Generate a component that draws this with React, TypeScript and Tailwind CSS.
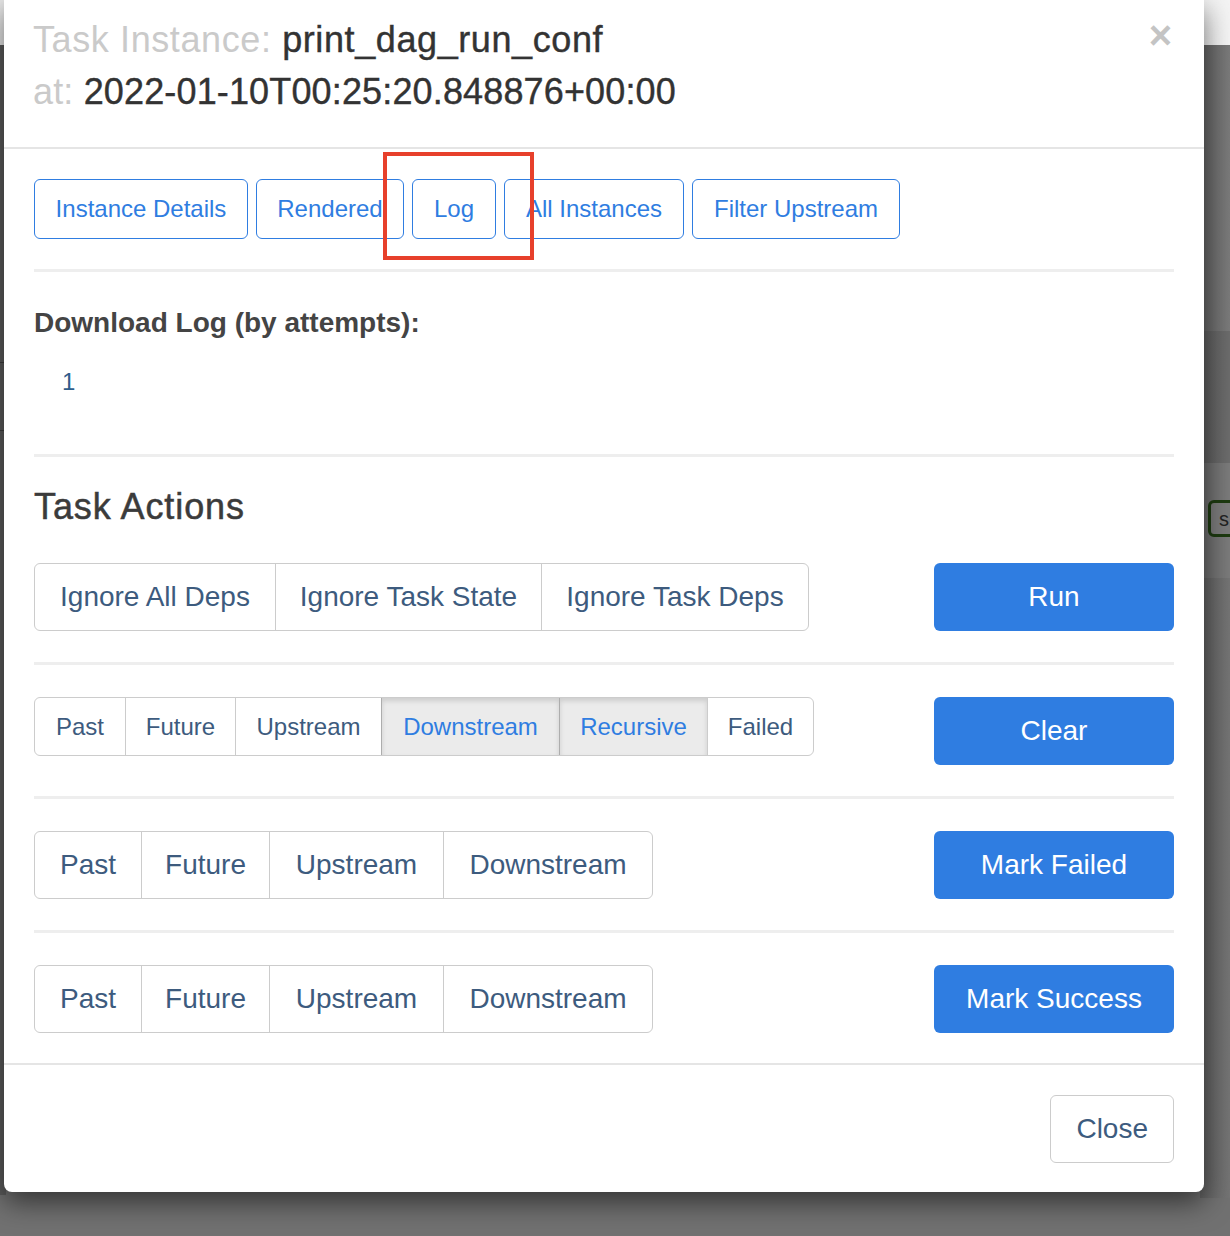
import React from "react";

const font = { fontFamily: '"Liberation Sans", Arial, Helvetica, sans-serif' };

function Seg({
  items,
  widths,
  size,
  active = [],
}: {
  items: string[];
  widths: string[];
  size: "lg" | "md";
  active?: string[];
}) {
  return (
    <div
      className={
        "flex rounded-[6px] border border-[#cccccc] overflow-hidden bg-white " +
        (size === "lg" ? "h-[68px]" : "h-[59px]")
      }
    >
      {items.map((t, i) => {
        const isActive = active.includes(t);
        return (
          <div
            key={t + i}
            className={
              "flex items-center justify-center whitespace-nowrap " +
              widths[i] +
              " " +
              (i > 0 ? "border-l " : "") +
              (isActive
                ? "border-[#adadad] bg-[#ebebeb] text-[#2f7de1] shadow-[inset_0_3px_5px_rgba(0,0,0,0.13)] "
                : "border-[#cccccc] text-[#3d5b7e] ") +
              (size === "lg" ? "text-[28px]" : "text-[24px]")
            }
          >
            {t}
          </div>
        );
      })}
    </div>
  );
}

function Primary({ label }: { label: string }) {
  return (
    <div className="w-[240px] h-[68px] rounded-[6px] bg-[#2f7de1] text-white text-[28px] flex items-center justify-center">
      {label}
    </div>
  );
}

function Hr({ mt }: { mt: string }) {
  return <div className={"h-[3px] bg-[#eeeeee] " + mt} />;
}

const w4 = ["w-[106px]", "w-[128px]", "w-[174px]", "w-[209px]"];

const tabs: { label: string; w: string }[] = [
  { label: "Instance Details", w: "w-[214px]" },
  { label: "Rendered", w: "w-[148px]" },
  { label: "Log", w: "w-[84px]" },
  { label: "All Instances", w: "w-[180px]" },
  { label: "Filter Upstream", w: "w-[208px]" },
];

export default function App() {
  return (
    <div
      className="relative w-[1230px] h-[1236px] overflow-hidden bg-[#717171]"
      style={font}
    >
      {/* underlying page seen through backdrop */}
      <div className="absolute left-0 right-0 top-0 h-[45px] bg-gradient-to-r from-[#e9e9e9] to-[#f4f4f4]" />
      <div className="absolute left-0 top-[45px] w-[6px] h-[1150px] bg-[#5b5b5b]" />
      <div className="absolute left-0 top-[362px] w-[6px] h-[1px] bg-[#3d3d3d]" />
      <div className="absolute left-0 top-[430px] w-[6px] h-[1px] bg-[#3d3d3d]" />
      <div className="absolute right-0 top-[45px] w-[30px] h-[286px] bg-gradient-to-r from-[#656565] to-[#7a7a7a]" />
      <div className="absolute right-0 top-[331px] w-[30px] h-[132px] bg-gradient-to-r from-[#5e5e5e] to-[#6c6c6c]" />
      <div className="absolute right-0 top-[463px] w-[30px] h-[115px] bg-gradient-to-r from-[#6c6c6c] to-[#7b7b7b]" />
      <div className="absolute right-0 top-[578px] w-[30px] h-[620px] bg-gradient-to-r from-[#626262] to-[#747474]" />
      <div className="absolute left-[1208px] top-[500px] w-[40px] h-[37px] rounded-[6px] border-[3px] border-[#1d3a10] bg-[#7a7a7a] flex items-center pl-[8px] text-[20px] text-[#222]">
        s
      </div>

      {/* modal */}
      <div className="relative ml-[4px] w-[1200px] bg-white rounded-b-[8px] shadow-[0_10px_28px_rgba(0,0,0,0.55)]">
        {/* header */}
        <div className="flex justify-between pl-[29px] pr-[32px] pt-[14px] pb-[29px] border-b-[2px] border-[#e5e5e5]">
          <div className="text-[36px] leading-[52px]">
            <div className="tracking-[0.6px]">
              <span className="text-[#cacaca]">Task Instance: </span>
              <span className="text-[#333333] [-webkit-text-stroke:0.4px_#333333]">print_dag_run_conf</span>
            </div>
            <div className="tracking-[0.15px]">
              <span className="text-[#cacaca]">at: </span>
              <span className="text-[#333333] [-webkit-text-stroke:0.4px_#333333]">2022-01-10T00:25:20.848876+00:00</span>
            </div>
          </div>
          <div className="text-[40px] leading-[40px] font-bold text-[#c4c4c4] mt-[1px]">×</div>
        </div>

        {/* body */}
        <div className="px-[30px] pt-[30px] pb-[30px]">
          <div className="relative flex gap-[8px]">
            {tabs.map((t) => (
              <div
                key={t.label}
                className={
                  "h-[60px] flex items-center justify-center rounded-[6px] border-[1.5px] border-[#2f7de1] text-[24px] text-[#2f7de1] whitespace-nowrap " +
                  t.w
                }
              >
                {t.label}
              </div>
            ))}
            <div className="absolute left-[349px] top-[-27px] w-[151px] h-[108px] border-[4px] border-[#e7402b]" />
          </div>

          <Hr mt="mt-[30px]" />

          <div className="mt-[34px] text-[28px] leading-[34px] font-bold text-[#444444]">
            Download Log (by attempts):
          </div>
          <div className="mt-[25px] pl-[28px] text-[24px] leading-[34px] text-[#2f5d8a]">1</div>

          <Hr mt="mt-[55px]" />

          <div className="mt-[30px] text-[36px] leading-[40px] text-[#3b3b3b] tracking-[0.9px] [-webkit-text-stroke:0.5px_#3b3b3b]">
            Task Actions
          </div>

          <div className="mt-[36px] flex justify-between items-start">
            <Seg
              size="lg"
              items={["Ignore All Deps", "Ignore Task State", "Ignore Task Deps"]}
              widths={["w-[240px]", "w-[266px]", "w-[267px]"]}
            />
            <Primary label="Run" />
          </div>

          <Hr mt="mt-[31px]" />

          <div className="mt-[32px] flex justify-between items-start">
            <Seg
              size="md"
              items={["Past", "Future", "Upstream", "Downstream", "Recursive", "Failed"]}
              widths={["w-[90px]", "w-[110px]", "w-[146px]", "w-[178px]", "w-[148px]", "w-[106px]"]}
              active={["Downstream", "Recursive"]}
            />
            <Primary label="Clear" />
          </div>

          <Hr mt="mt-[31px]" />

          <div className="mt-[32px] flex justify-between items-start">
            <Seg size="lg" items={["Past", "Future", "Upstream", "Downstream"]} widths={w4} />
            <Primary label="Mark Failed" />
          </div>

          <Hr mt="mt-[31px]" />

          <div className="mt-[32px] flex justify-between items-start">
            <Seg size="lg" items={["Past", "Future", "Upstream", "Downstream"]} widths={w4} />
            <Primary label="Mark Success" />
          </div>
        </div>

        {/* footer */}
        <div className="border-t-[2px] border-[#e5e5e5] px-[30px] pt-[30px] pb-[29px] flex justify-end">
          <div className="h-[68px] px-[25px] flex items-center rounded-[6px] border border-[#cccccc] text-[28px] text-[#3d5b7e]">
            Close
          </div>
        </div>
      </div>
    </div>
  );
}
